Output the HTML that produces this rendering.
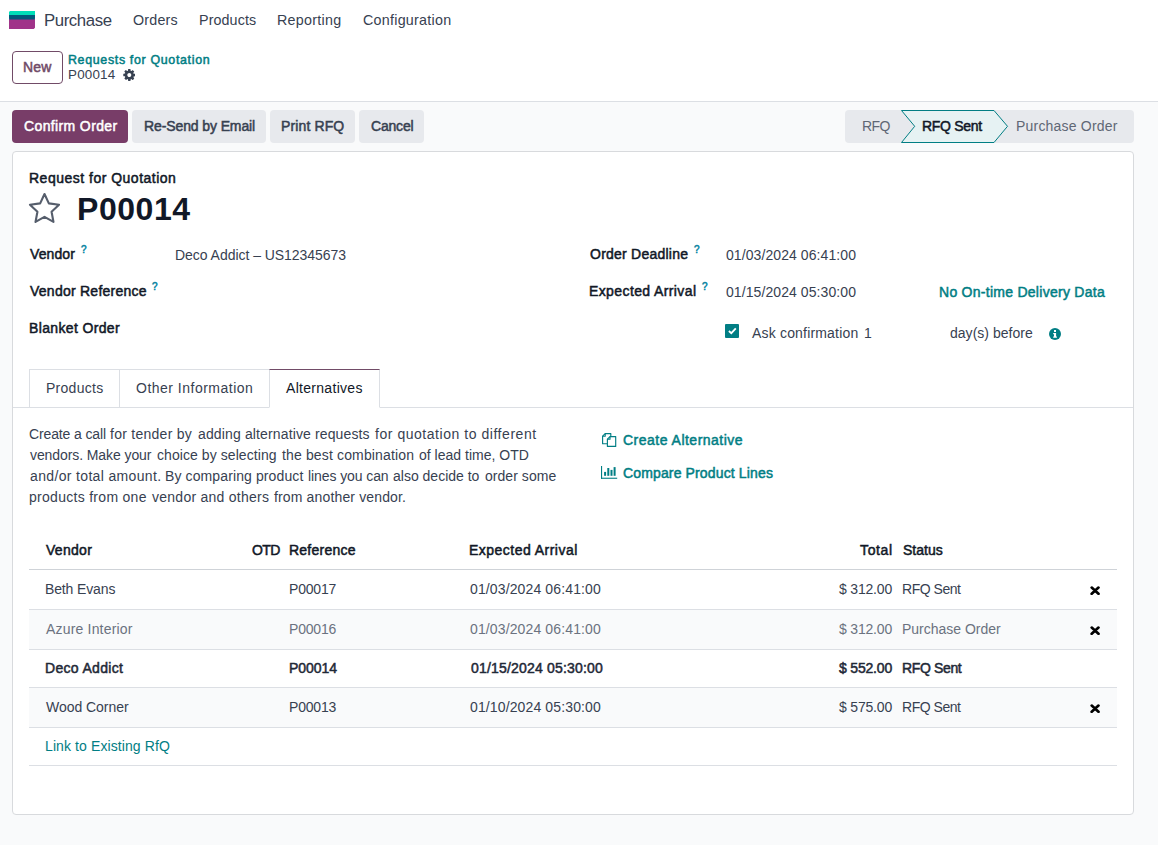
<!DOCTYPE html>
<html lang="en"><head><meta charset="utf-8"><title>Odoo - P00014</title>
<style>
html,body{margin:0;padding:0;}
body{width:1158px;height:845px;overflow:hidden;background:#f9fafb;font-family:"Liberation Sans",sans-serif;position:relative;}
.t{position:absolute;white-space:pre;line-height:1;}
.a{position:absolute;box-sizing:border-box;}
</style></head><body>
<!-- top white area -->
<div class="a" style="left:0;top:0;width:1158px;height:101px;background:#fff;border-bottom:1px solid #dcdfe4;height:102px"></div>
<!-- logo -->
<svg class="a" style="left:9px;top:10.800px" width="26" height="18.200" viewBox="0 0 26 18.200"><path d="M0 8h26v8.700l-1.500 1.500H0z" fill="#a03389"/><path d="M0 4h26v3.500a1 1 0 0 1-1 1H1a1 1 0 0 1-1-1z" fill="#005a7a"/><path d="M1 0h25v4H0V1z" fill="#00dfb9"/></svg>
<!-- New button -->
<div class="a" style="left:12px;top:51px;width:51px;height:33px;border:1px solid #714B67;border-radius:4px;background:#fff"></div>
<!-- gear -->
<svg class="a" style="left:122.6px;top:69px" width="12.6" height="12" viewBox="0 0 1536 1536"><path fill="#374151" d="M1024 768q0-106-75-181t-181-75-181 75-75 181 75 181 181 75 181-75 75-181zm512-109v222q0 12-8 23t-20 13l-185 28q-19 54-39 91 35 50 107 138 10 12 10 25t-9 23q-27 37-99 108t-94 71q-12 0-26-9l-138-108q-44 23-91 38-16 136-29 186-7 28-36 28h-222q-14 0-24.500-8.500t-11.500-21.500l-28-184q-49-16-90-37l-141 107q-10 9-25 9-14 0-25-11-126-114-165-168-7-10-7-23 0-12 8-23 15-21 51-66.500t54-70.500q-27-50-41-99l-183-27q-13-2-21-12.500t-8-23.500v-222q0-12 8-23t19-13l186-28q14-46 39-92-40-57-107-138-10-12-10-24 0-10 9-23 26-36 98.500-107.500t94.500-71.500q13 0 26 10l138 107q44-23 91-38 16-136 29-186 7-28 36-28h222q14 0 24.500 8.500t11.500 21.500l28 184q49 16 90 37l142-107q9-9 24-9 13 0 25 10 129 119 165 170 7 8 7 22 0 12-8 23-15 21-51 66.500t-54 70.500q26 50 41 98l183 28q13 2 21 12.500t8 23.500z"/></svg>
<!-- buttons -->
<div class="a" style="left:12px;top:110px;width:116px;height:33px;border-radius:4px;background:#783d68"></div>
<div class="a" style="left:132px;top:110px;width:134px;height:33px;border-radius:4px;background:#e7e9ed"></div>
<div class="a" style="left:270px;top:110px;width:85px;height:33px;border-radius:4px;background:#e7e9ed"></div>
<div class="a" style="left:359px;top:110px;width:65px;height:33px;border-radius:4px;background:#e7e9ed"></div>
<!-- statusbar -->
<div class="a" style="left:845px;top:110px;width:289px;height:33px;border-radius:4px;background:#e7e9ed"></div>
<svg class="a" style="left:890px;top:105px" width="130" height="43" viewBox="890 105 130 43"><polygon points="901.5,110.5 994,110.5 1007.5,126.3 994,142.5 901.5,142.5 914.7,126.3" fill="#e6f2f3" stroke="#017e84" stroke-width="1" stroke-linejoin="miter"/></svg>
<!-- sheet -->
<div class="a" style="left:12px;top:151px;width:1122px;height:664px;background:#fff;border:1px solid #d8dadd;border-radius:4px"></div>
<!-- star -->
<svg class="a" style="left:28px;top:192px" width="33" height="32" viewBox="-16.35 -16.2 32.7 31.7"><polygon points="0,-14.2 4.3,-4.9 14.4,-3.6 7,3.3 8.9,13.4 0,8.5 -8.9,13.4 -7,3.3 -14.4,-3.6 -4.3,-4.9" fill="none" stroke="#565e6c" stroke-width="2.1" stroke-linejoin="round"/></svg>
<!-- checkbox -->
<div class="a" style="left:725px;top:324px;width:14px;height:14px;border-radius:1px;background:#017e84"></div>
<svg class="a" style="left:725px;top:324px" width="14" height="14" viewBox="0 0 14 14"><path d="M3.900 7l2.400 2.200 4.500-4.900" fill="none" stroke="#fff" stroke-width="1.800"/></svg>
<!-- info icon -->
<svg class="a" style="left:1048.8px;top:327.5px" width="12" height="12" viewBox="0 0 12 12"><circle cx="6" cy="6" r="6" fill="#017e84"/><rect x="5" y="2" width="2" height="2" fill="#fff"/><path d="M4.2 5h2.9v3.6h.8v1.2H4.2V8.6H5V6.2h-.8z" fill="#fff"/></svg>
<!-- tabs -->
<div class="a" style="left:13px;top:407px;width:1120px;height:1px;background:#dcdfe4"></div>
<div class="a" style="left:29px;top:369px;width:91px;height:39px;border:1px solid #dcdfe4;border-right:0"></div>
<div class="a" style="left:119px;top:369px;width:151px;height:39px;border:1px solid #dcdfe4;border-right:0"></div>
<div class="a" style="left:269px;top:369px;width:111px;height:39px;border:1px solid #dcdfe4;border-top-color:#714B67;border-bottom-color:#fff;background:#fff"></div>
<!-- link icons -->
<svg class="a" style="left:602px;top:433px" width="15" height="14" viewBox="0 0 15 14"><g fill="none" stroke="#017e84" stroke-width="1.15" stroke-linejoin="round"><path d="M5.400 10.700H0.600V3.200L3.200 0.600H8.800V3.400"/><path d="M3.200 0.600V3.200H0.600"/><path d="M8 3.600H13.700V13.400H5.400V6.200Z"/><path d="M8 3.600V6.200H5.400"/></g></svg>
<svg class="a" style="left:601px;top:465.3px" width="17" height="14" viewBox="0 0 17 14"><g fill="#017e84"><rect x="0" y="1" width="1.100" height="12.800"/><rect x="0" y="12.700" width="16.200" height="1.100"/><rect x="3.100" y="6.900" width="2" height="3.900"/><rect x="6.300" y="3" width="2" height="7.800"/><rect x="9.500" y="4.900" width="2" height="5.900"/><rect x="12.600" y="2.100" width="2" height="8.700"/></g></svg>
<!-- table -->
<div class="a" style="left:29px;top:610px;width:1088px;height:39px;background:#f9fafb"></div>
<div class="a" style="left:29px;top:688px;width:1088px;height:39px;background:#f9fafb"></div>
<div class="a" style="left:29px;top:569px;width:1088px;height:1px;background:#cfd3d8"></div>
<div class="a" style="left:29px;top:609px;width:1088px;height:1px;background:#dcdfe4"></div>
<div class="a" style="left:29px;top:649px;width:1088px;height:1px;background:#dcdfe4"></div>
<div class="a" style="left:29px;top:687px;width:1088px;height:1px;background:#dcdfe4"></div>
<div class="a" style="left:29px;top:727px;width:1088px;height:1px;background:#dcdfe4"></div>
<div class="a" style="left:29px;top:765px;width:1088px;height:1px;background:#dcdfe4"></div>
<!-- x icons -->
<svg class="a" style="left:1090px;top:585.8px" width="10.2" height="9.4" viewBox="0 0 10.2 9.4"><path d="M1.700 1.600l6.800 6.200M8.500 1.600l-6.800 6.200" stroke="#000" stroke-width="2.700" stroke-linecap="round" fill="none"/></svg>
<svg class="a" style="left:1090px;top:625.6px" width="10.2" height="9.4" viewBox="0 0 10.2 9.4"><path d="M1.700 1.600l6.800 6.200M8.500 1.600l-6.800 6.200" stroke="#000" stroke-width="2.700" stroke-linecap="round" fill="none"/></svg>
<svg class="a" style="left:1090px;top:703.8px" width="10.2" height="9.4" viewBox="0 0 10.2 9.4"><path d="M1.700 1.600l6.800 6.200M8.500 1.600l-6.800 6.200" stroke="#000" stroke-width="2.700" stroke-linecap="round" fill="none"/></svg>

<span class="t" style="top:13px;font-size:16.8px;color:#374151;letter-spacing:-0.414px;left:44.00px;">Purchase</span>
<span class="t" style="top:13px;font-size:14.3px;color:#374151;letter-spacing:0.200px;left:133.00px;">Orders</span>
<span class="t" style="top:13px;font-size:14.3px;color:#374151;letter-spacing:0.100px;left:199.00px;">Products</span>
<span class="t" style="top:13px;font-size:14.3px;color:#374151;letter-spacing:0.275px;left:277.00px;">Reporting</span>
<span class="t" style="top:13px;font-size:14.3px;color:#374151;letter-spacing:0.258px;left:363.00px;">Configuration</span>
<span class="t" style="top:60px;font-size:14px;color:#714B67;letter-spacing:0.200px;-webkit-text-stroke:0.5px #714B67;left:23.00px;">New</span>
<span class="t" style="top:54px;font-size:12.4px;color:#017e84;letter-spacing:0.676px;-webkit-text-stroke:0.5px #017e84;left:68.00px;">Requests for Quotation</span>
<span class="t" style="top:68px;font-size:13.4px;color:#374151;letter-spacing:0.200px;left:68.00px;">P00014</span>
<span class="t" style="top:119px;font-size:14px;color:#fff;letter-spacing:0.371px;-webkit-text-stroke:0.5px #fff;left:24.00px;">Confirm Order</span>
<span class="t" style="top:119px;font-size:14px;color:#374151;letter-spacing:-0.107px;-webkit-text-stroke:0.5px #374151;left:144.00px;">Re-Send by Email</span>
<span class="t" style="top:119px;font-size:14px;color:#374151;letter-spacing:0.125px;-webkit-text-stroke:0.5px #374151;left:281.00px;">Print RFQ</span>
<span class="t" style="top:119px;font-size:14px;color:#374151;letter-spacing:-0.200px;-webkit-text-stroke:0.5px #374151;left:371.00px;">Cancel</span>
<span class="t" style="top:119px;font-size:14px;color:#5f6775;letter-spacing:-0.600px;left:862.00px;">RFQ</span>
<span class="t" style="top:119px;font-size:14px;color:#111827;letter-spacing:-0.314px;-webkit-text-stroke:0.5px #111827;left:922.00px;">RFQ Sent</span>
<span class="t" style="top:119px;font-size:14px;color:#5f6775;letter-spacing:0.200px;left:1016.00px;">Purchase Order</span>
<span class="t" style="top:171px;font-size:14px;color:#111827;letter-spacing:0.495px;-webkit-text-stroke:0.5px #111827;left:29.00px;">Request for Quotation</span>
<span class="t" style="top:193px;font-size:32px;color:#111827;letter-spacing:0.560px;font-weight:700;left:77.00px;">P00014</span>
<span class="t" style="top:247px;font-size:14px;color:#111827;letter-spacing:0.100px;-webkit-text-stroke:0.5px #111827;left:30.00px;">Vendor</span>
<span class="t" style="top:248px;font-size:14px;color:#374151;letter-spacing:-0.039px;left:175.00px;">Deco Addict – US12345673</span>
<span class="t" style="top:284px;font-size:14px;color:#111827;letter-spacing:0.247px;-webkit-text-stroke:0.5px #111827;left:30.00px;">Vendor Reference</span>
<span class="t" style="top:321px;font-size:14px;color:#111827;letter-spacing:0.350px;-webkit-text-stroke:0.5px #111827;left:29.00px;">Blanket Order</span>
<span class="t" style="top:247px;font-size:14px;color:#111827;letter-spacing:0.238px;-webkit-text-stroke:0.5px #111827;left:590.00px;">Order Deadline</span>
<span class="t" style="top:248px;font-size:14px;color:#374151;letter-spacing:0.083px;left:726.00px;">01/03/2024 06:41:00</span>
<span class="t" style="top:284px;font-size:14px;color:#111827;letter-spacing:0.393px;-webkit-text-stroke:0.5px #111827;left:589.00px;">Expected Arrival</span>
<span class="t" style="top:285px;font-size:14px;color:#374151;letter-spacing:0.083px;left:726.00px;">01/15/2024 05:30:00</span>
<span class="t" style="top:285px;font-size:14px;color:#017e84;letter-spacing:0.270px;-webkit-text-stroke:0.5px #017e84;left:939.00px;">No On-time Delivery Data</span>
<span class="t" style="top:326px;font-size:14px;color:#374151;letter-spacing:0.180px;left:752.00px;">Ask confirmation</span>
<span class="t" style="top:326px;font-size:14px;color:#374151;letter-spacing:0.000px;left:864.00px;">1</span>
<span class="t" style="top:326px;font-size:14px;color:#374151;letter-spacing:0.025px;left:950.00px;">day(s) before</span>
<span class="t" style="top:245px;font-size:10px;color:#0a84a2;letter-spacing:0.000px;-webkit-text-stroke:0.5px #0a84a2;left:81.00px;">?</span>
<span class="t" style="top:282px;font-size:10px;color:#0a84a2;letter-spacing:0.000px;-webkit-text-stroke:0.5px #0a84a2;left:152.00px;">?</span>
<span class="t" style="top:245px;font-size:10px;color:#0a84a2;letter-spacing:0.000px;-webkit-text-stroke:0.5px #0a84a2;left:694.00px;">?</span>
<span class="t" style="top:282px;font-size:10px;color:#0a84a2;letter-spacing:0.000px;-webkit-text-stroke:0.5px #0a84a2;left:702.00px;">?</span>
<span class="t" style="top:381px;font-size:14px;color:#374151;letter-spacing:0.271px;left:46.00px;">Products</span>
<span class="t" style="top:381px;font-size:14px;color:#374151;letter-spacing:0.494px;left:136.00px;">Other Information</span>
<span class="t" style="top:381px;font-size:14px;color:#111827;letter-spacing:0.300px;left:286.00px;">Alternatives</span>
<span class="t" style="top:427px;font-size:14px;color:#374151;letter-spacing:-0.133px;left:29.00px;">Create a call</span>
<span class="t" style="top:427px;font-size:14px;color:#374151;letter-spacing:0.267px;left:110.00px;">for tender by</span>
<span class="t" style="top:427px;font-size:14px;color:#374151;letter-spacing:0.135px;left:198.00px;">adding alternative requests</span>
<span class="t" style="top:427px;font-size:14px;color:#374151;letter-spacing:0.540px;left:375.00px;">for quotation to different</span>
<span class="t" style="top:448px;font-size:14px;color:#374151;letter-spacing:-0.088px;left:30.00px;">vendors. Make your</span>
<span class="t" style="top:448px;font-size:14px;color:#374151;letter-spacing:0.072px;left:157.00px;">choice by selecting</span>
<span class="t" style="top:448px;font-size:14px;color:#374151;letter-spacing:0.147px;left:282.00px;">the best combination</span>
<span class="t" style="top:448px;font-size:14px;color:#374151;letter-spacing:0.012px;left:419.00px;">of lead time, OTD</span>
<span class="t" style="top:469px;font-size:14px;color:#374151;letter-spacing:0.347px;left:30.00px;">and/or total amount.</span>
<span class="t" style="top:469px;font-size:14px;color:#374151;letter-spacing:0.111px;left:165.00px;">By comparing product</span>
<span class="t" style="top:469px;font-size:14px;color:#374151;letter-spacing:-0.092px;left:308.00px;">lines you can</span>
<span class="t" style="top:469px;font-size:14px;color:#374151;letter-spacing:-0.000px;left:393.00px;">also decide to</span>
<span class="t" style="top:469px;font-size:14px;color:#374151;letter-spacing:0.044px;left:485.00px;">order some</span>
<span class="t" style="top:490px;font-size:14px;color:#374151;letter-spacing:0.288px;left:29.00px;">products from one</span>
<span class="t" style="top:490px;font-size:14px;color:#374151;letter-spacing:0.256px;left:152.00px;">vendor and others</span>
<span class="t" style="top:490px;font-size:14px;color:#374151;letter-spacing:0.147px;left:274.00px;">from another vendor.</span>
<span class="t" style="top:433px;font-size:14px;color:#017e84;letter-spacing:0.488px;-webkit-text-stroke:0.5px #017e84;left:623.00px;">Create Alternative</span>
<span class="t" style="top:466px;font-size:14px;color:#017e84;letter-spacing:0.140px;-webkit-text-stroke:0.5px #017e84;left:623.00px;">Compare Product Lines</span>
<span class="t" style="top:543px;font-size:14px;color:#111827;letter-spacing:0.300px;-webkit-text-stroke:0.5px #111827;left:46.00px;">Vendor</span>
<span class="t" style="top:543px;font-size:14px;color:#111827;letter-spacing:-0.600px;-webkit-text-stroke:0.5px #111827;left:252.00px;">OTD</span>
<span class="t" style="top:543px;font-size:14px;color:#111827;letter-spacing:0.237px;-webkit-text-stroke:0.5px #111827;left:289.00px;">Reference</span>
<span class="t" style="top:543px;font-size:14px;color:#111827;letter-spacing:0.473px;-webkit-text-stroke:0.5px #111827;left:469.00px;">Expected Arrival</span>
<span class="t" style="top:543px;font-size:14px;color:#111827;letter-spacing:0.625px;-webkit-text-stroke:0.5px #111827;left:860.00px;">Total</span>
<span class="t" style="top:543px;font-size:14px;color:#111827;letter-spacing:0.020px;-webkit-text-stroke:0.5px #111827;left:903.00px;">Status</span>
<span class="t" style="top:582px;font-size:14px;color:#374151;letter-spacing:-0.133px;left:45.00px;">Beth Evans</span>
<span class="t" style="top:582px;font-size:14px;color:#374151;letter-spacing:-0.200px;left:289.00px;">P00017</span>
<span class="t" style="top:582px;font-size:14px;color:#374151;letter-spacing:0.128px;left:470.00px;">01/03/2024 06:41:00</span>
<span class="t" style="top:582px;font-size:14px;color:#374151;letter-spacing:-0.186px;left:839.00px;">$ 312.00</span>
<span class="t" style="top:582px;font-size:14px;color:#374151;letter-spacing:-0.471px;left:902.00px;">RFQ Sent</span>
<span class="t" style="top:622px;font-size:14px;color:#6b7280;letter-spacing:0.185px;left:46.00px;">Azure Interior</span>
<span class="t" style="top:622px;font-size:14px;color:#6b7280;letter-spacing:-0.200px;left:289.00px;">P00016</span>
<span class="t" style="top:622px;font-size:14px;color:#6b7280;letter-spacing:0.128px;left:470.00px;">01/03/2024 06:41:00</span>
<span class="t" style="top:622px;font-size:14px;color:#6b7280;letter-spacing:-0.186px;left:839.00px;">$ 312.00</span>
<span class="t" style="top:622px;font-size:14px;color:#6b7280;letter-spacing:-0.008px;left:902.00px;">Purchase Order</span>
<span class="t" style="top:661px;font-size:14px;color:#1f2937;letter-spacing:0.320px;-webkit-text-stroke:0.5px #1f2937;left:45.00px;">Deco Addict</span>
<span class="t" style="top:661px;font-size:14px;color:#1f2937;letter-spacing:-0.060px;-webkit-text-stroke:0.5px #1f2937;left:289.00px;">P00014</span>
<span class="t" style="top:661px;font-size:14px;color:#1f2937;letter-spacing:0.189px;-webkit-text-stroke:0.5px #1f2937;left:471.00px;">01/15/2024 05:30:00</span>
<span class="t" style="top:661px;font-size:14px;color:#1f2937;letter-spacing:-0.186px;-webkit-text-stroke:0.5px #1f2937;left:839.00px;">$ 552.00</span>
<span class="t" style="top:661px;font-size:14px;color:#1f2937;letter-spacing:-0.357px;-webkit-text-stroke:0.5px #1f2937;left:902.00px;">RFQ Sent</span>
<span class="t" style="top:700px;font-size:14px;color:#374151;letter-spacing:-0.040px;left:46.00px;">Wood Corner</span>
<span class="t" style="top:700px;font-size:14px;color:#374151;letter-spacing:-0.200px;left:289.00px;">P00013</span>
<span class="t" style="top:700px;font-size:14px;color:#374151;letter-spacing:0.128px;left:470.00px;">01/10/2024 05:30:00</span>
<span class="t" style="top:700px;font-size:14px;color:#374151;letter-spacing:-0.186px;left:839.00px;">$ 575.00</span>
<span class="t" style="top:700px;font-size:14px;color:#374151;letter-spacing:-0.471px;left:902.00px;">RFQ Sent</span>
<span class="t" style="top:739px;font-size:14px;color:#017e84;letter-spacing:0.100px;left:45.00px;">Link to Existing RfQ</span>
</body></html>
